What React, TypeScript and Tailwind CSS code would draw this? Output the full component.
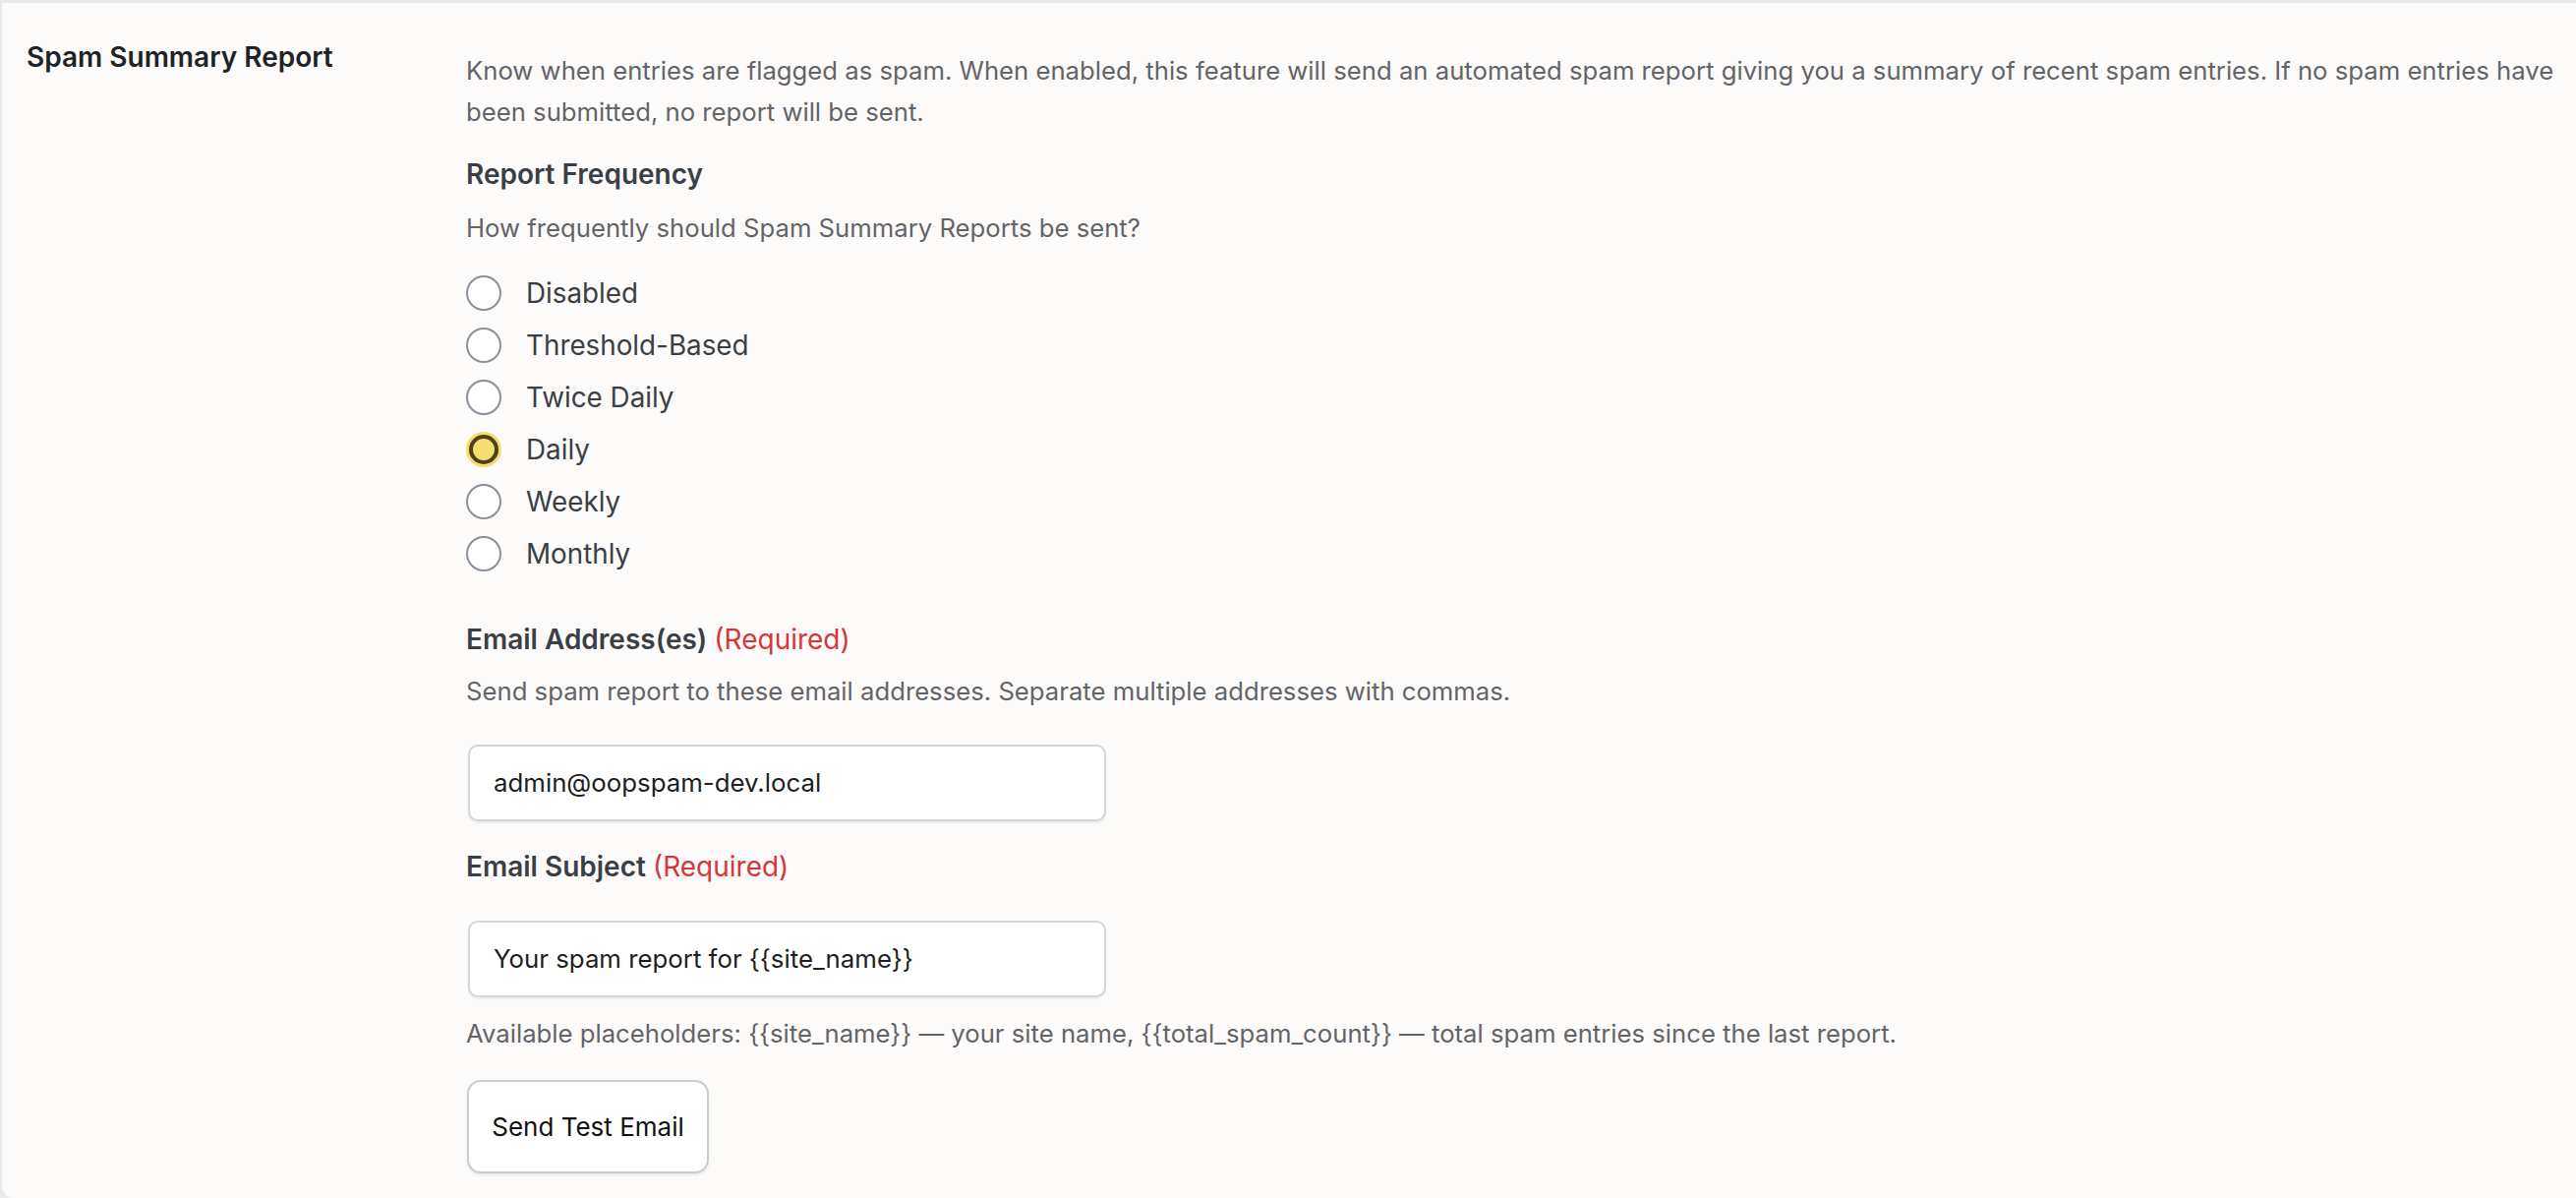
import React from "react";

const font = { fontFamily: "Inter, 'Noto Sans', sans-serif" };

function Radio({ label, checked }: { label: string; checked?: boolean }) {
  return (
    <label className="flex h-[53px] items-center">
      {checked ? (
        <span className="flex h-[36px] w-[36px] items-center justify-center rounded-full bg-[#f6dd6c]">
          <span className="h-[30px] w-[30px] rounded-full border-[4px] border-[#4a4316] bg-[#f8dd72]" />
        </span>
      ) : (
        <span className="h-[36px] w-[36px] rounded-full border-[2px] border-[#8f8e9a] bg-white" />
      )}
      <span className="ml-[25px] text-[27.8px] leading-[36px] text-[#3a3f46]">{label}</span>
    </label>
  );
}

export default function App() {
  return (
    <div className="h-[1218px] w-full overflow-hidden bg-[#ebebeb] pl-[2px] pt-[3px]" style={font}>
      <div className="flex h-full w-full rounded-bl-[12px] bg-[#fcfbfa]">
        <div className="w-[472px] shrink-0 pl-[25px] pt-[37px]">
          <h2 className="text-[28px] font-semibold leading-[36px] text-[#1d2327]">Spam Summary Report</h2>
        </div>
        <div className="flex-1 pr-[8px] pt-[48px]">
          <p className="text-[25.7px] leading-[42px] text-[#636468]">
            Know when entries are flagged as spam. When enabled, this feature will send an automated spam report giving you a summary of recent spam entries. If no spam entries have been submitted, no report will be sent.
          </p>
          <h3 className="mt-[21px] text-[28px] font-semibold leading-[42px] text-[#3a3f46]">Report Frequency</h3>
          <p className="mt-[13px] text-[25.7px] leading-[42px] text-[#636468]">How frequently should Spam Summary Reports be sent?</p>
          <div className="mt-[18px] flex flex-col">
            <Radio label="Disabled" />
            <Radio label="Threshold-Based" />
            <Radio label="Twice Daily" />
            <Radio label="Daily" checked />
            <Radio label="Weekly" />
            <Radio label="Monthly" />
          </div>
          <h3 className="mt-[40px] text-[28px] font-semibold leading-[42px] text-[#3a3f46]">
            Email Address(es) <span className="font-normal text-[#d63638]">(Required)</span>
          </h3>
          <p className="mt-[11px] text-[25.7px] leading-[42px] text-[#636468]">
            Send spam report to these email addresses. Separate multiple addresses with commas.
          </p>
          <div className="ml-[2px] mt-[33px] flex h-[78px] w-[649px] items-center rounded-[10px] border-[2px] border-[#d6d6d6] bg-white pl-[24px] text-[25.8px] text-[#1e1e1e] shadow-[0_2px_2px_rgba(0,0,0,0.06)]">
            admin@oopspam-dev.local
          </div>
          <h3 className="mt-[25px] text-[28px] font-semibold leading-[42px] text-[#3a3f46]">
            Email Subject <span className="font-normal text-[#d63638]">(Required)</span>
          </h3>
          <div className="ml-[2px] mt-[34px] flex h-[78px] w-[649px] items-center rounded-[10px] border-[2px] border-[#d6d6d6] bg-white pl-[24px] text-[25.8px] text-[#1e1e1e] shadow-[0_2px_2px_rgba(0,0,0,0.06)]">
            {"Your spam report for {{site_name}}"}
          </div>
          <p className="mt-[16px] text-[25.7px] leading-[42px] text-[#636468]">
            {"Available placeholders: {{site_name}} — your site name, {{total_spam_count}} — total spam entries since the last report."}
          </p>
          <button className="ml-[1px] mt-[26px] flex h-[95px] w-[246px] items-center justify-center rounded-[14px] border-[2px] border-[#cccccc] bg-white text-[26px] text-[#111111] shadow-[0_2px_3px_rgba(0,0,0,0.08)]">
            Send Test Email
          </button>
        </div>
      </div>
    </div>
  );
}
